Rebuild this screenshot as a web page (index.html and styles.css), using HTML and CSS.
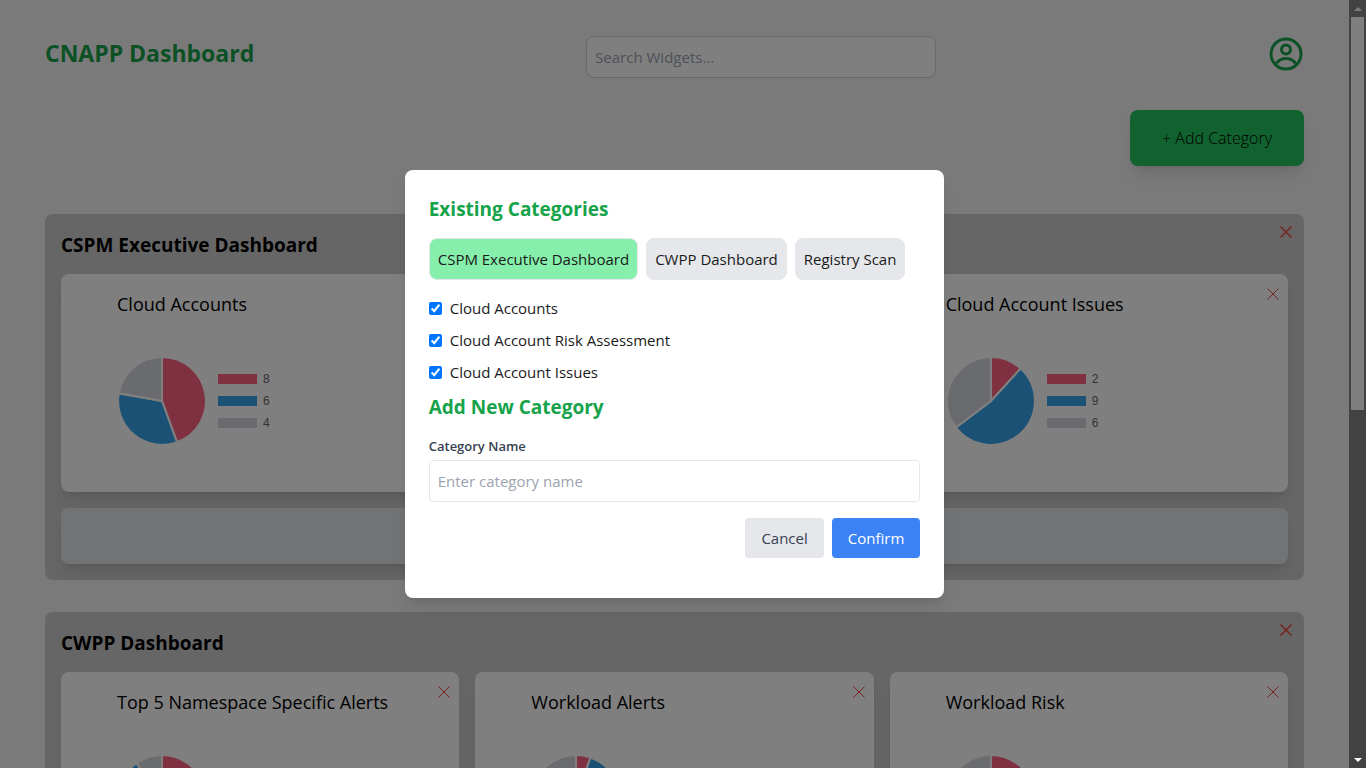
FILE: index.html
```
<!DOCTYPE html>
<html lang="en">
<head>
<meta charset="utf-8">
<meta name="viewport" content="width=device-width, initial-scale=1">
<title>CNAPP Dashboard</title>
<link rel="stylesheet" href="styles.css">
</head>
<body>
<svg class="symbols" aria-hidden="true">
  <symbol id="x" viewBox="0 0 20 20"><path d="M4.5 4.5l11 11M15.5 4.5l-11 11" fill="none" stroke="currentColor"/></symbol>
</svg>
<div class="shell">
  <div class="viewport">
    <main class="page">
      <header class="topbar">
        <h1 class="brand">CNAPP Dashboard</h1>
        <input class="search" type="search" placeholder="Search Widgets..." aria-label="Search widgets">
        <button class="profile" type="button" aria-label="Profile">
          <svg viewBox="0 0 24 24" width="36" height="36" fill="none" stroke="currentColor" stroke-width="2"><circle cx="12" cy="12" r="10"/><circle cx="12" cy="9" r="3"/><path d="M5.500 18.300A8 8 0 0 1 18.500 18.300"/></svg>
        </button>
      </header>
      <div class="actions"><button class="add" type="button">+ Add Category</button></div>

      <section class="category">
        <h2 class="category-title">CSPM Executive Dashboard</h2>
        <button class="close" type="button" aria-label="Remove category"><svg><use href="#x"/></svg></button>
        <div class="widgets">
          <article class="widget">
            <h3 class="widget-title">Cloud Accounts</h3>
            <div class="chart">
              <svg class="pie" viewBox="1 1 88 88"><path class="red" d="M45 45V2A43 43 0 0 1 59.700 85.400Z"/><path class="blue" d="M45 45L59.700 85.400A43 43 0 0 1 2.700 37.500Z"/><path class="gray" d="M45 45L2.700 37.500A43 43 0 0 1 45 2Z"/></svg>
              <ul class="legend"><li><span class="swatch red"></span>8</li><li><span class="swatch blue"></span>6</li><li><span class="swatch gray"></span>4</li></ul>
            </div>
          </article>
          <article class="widget">
            <h3 class="widget-title">Cloud Account Risk Assessment</h3>
          </article>
          <article class="widget">
            <h3 class="widget-title">Cloud Account Issues</h3>
            <button class="close" type="button" aria-label="Remove widget"><svg><use href="#x"/></svg></button>
            <div class="chart">
              <svg class="pie" viewBox="1 1 88 88"><path class="red" d="M45 45V2A43 43 0 0 1 74 13.200Z"/><path class="blue" d="M45 45L74 13.200A43 43 0 1 1 10.700 70.900Z"/><path class="gray" d="M45 45L10.700 70.900A43 43 0 0 1 45 2Z"/></svg>
              <ul class="legend"><li><span class="swatch red"></span>2</li><li><span class="swatch blue"></span>9</li><li><span class="swatch gray"></span>6</li></ul>
            </div>
          </article>
          <div class="slot"></div>
        </div>
      </section>

      <section class="category">
        <h2 class="category-title">CWPP Dashboard</h2>
        <button class="close" type="button" aria-label="Remove category"><svg><use href="#x"/></svg></button>
        <div class="widgets">
          <article class="widget">
            <h3 class="widget-title">Top 5 Namespace Specific Alerts</h3>
            <button class="close" type="button" aria-label="Remove widget"><svg><use href="#x"/></svg></button>
            <div class="chart">
              <svg class="pie" viewBox="1 1 88 88"><path class="red" d="M45 45V2A43 43 0 0 1 59.700 85.400Z"/><path class="blue" d="M45 45L59.700 85.400A43 43 0 0 1 20 10Z"/><path class="gray" d="M45 45L20 10A43 43 0 0 1 45 2Z"/></svg>
            </div>
          </article>
          <article class="widget">
            <h3 class="widget-title">Workload Alerts</h3>
            <button class="close" type="button" aria-label="Remove widget"><svg><use href="#x"/></svg></button>
            <div class="chart">
              <svg class="pie" viewBox="1 1 88 88"><path class="red" d="M45 45V2A43 43 0 0 1 59.200 4.400Z"/><path class="blue" d="M45 45L59.200 4.400A43 43 0 1 1 30.300 85.400Z"/><path class="gray" d="M45 45L30.300 85.400A43 43 0 0 1 45 2Z"/></svg>
            </div>
          </article>
          <article class="widget">
            <h3 class="widget-title">Workload Risk</h3>
            <button class="close" type="button" aria-label="Remove widget"><svg><use href="#x"/></svg></button>
            <div class="chart">
              <svg class="pie" viewBox="1 1 88 88"><path class="red" d="M45 45V2A43 43 0 0 1 59.700 85.400Z"/><path class="blue" d="M45 45L59.700 85.400A43 43 0 0 1 7.800 66.500Z"/><path class="gray" d="M45 45L7.800 66.500A43 43 0 0 1 45 2Z"/></svg>
            </div>
          </article>
        </div>
      </section>
    </main>

    <div class="overlay">
      <form class="modal" role="dialog" aria-modal="true" aria-labelledby="existing">
        <h2 class="modal-title" id="existing">Existing Categories</h2>
        <div class="chips">
          <button class="chip selected" type="button">CSPM Executive Dashboard</button>
          <button class="chip" type="button">CWPP Dashboard</button>
          <button class="chip" type="button">Registry Scan</button>
        </div>
        <label class="check"><input type="checkbox" checked>Cloud Accounts</label>
        <label class="check"><input type="checkbox" checked>Cloud Account Risk Assessment</label>
        <label class="check"><input type="checkbox" checked>Cloud Account Issues</label>
        <h2 class="modal-title">Add New Category</h2>
        <label class="field-label" for="category-name">Category Name</label>
        <input class="field" id="category-name" type="text" placeholder="Enter category name">
        <div class="buttons">
          <button class="button cancel" type="button">Cancel</button>
          <button class="button confirm" type="submit">Confirm</button>
        </div>
      </form>
    </div>
  </div>

  <div class="scrollbar" aria-hidden="true">
    <span class="arrow up"></span>
    <span class="thumb"></span>
    <span class="arrow down"></span>
  </div>
</div>
</body>
</html>
```
FILE: styles.css
```
*, *::before, *::after { box-sizing: border-box; }
body, h1, h2, h3, ul { margin: 0; padding: 0; }
body {
  font: 15px/24px "Open Sans", "Noto Sans", sans-serif;
  color: #000;
}
button, input { font: inherit; color: inherit; margin: 0; }
button { border: 0; background: none; padding: 0; cursor: pointer; }
.symbols { display: none; }

.shell { display: flex; height: 100vh; overflow: hidden; }
.viewport { position: relative; flex: 1; min-width: 0; overflow: hidden; background: #f4f4f4; }
.page { padding: 36px 45px; }

.topbar { display: flex; justify-content: space-between; align-items: flex-start; margin-bottom: 32px; }
.brand { font-size: 23px; line-height: 34px; font-weight: 700; color: #16a34a; }
.search {
  width: 350px;
  height: 42px;
  padding: 8px;
  border: 1px solid #d1d5db;
  border-radius: 8px;
  background: #fff;
  appearance: none;
}
.search::placeholder, .field::placeholder { color: #9ca3af; opacity: 1; }
.profile { height: 36px; color: #16a34a; }
.profile svg { display: block; }

.actions { display: flex; justify-content: flex-end; margin-bottom: 48px; }
.add {
  padding: 16px 32px;
  border-radius: 8px;
  background: #22c55e;
  font-size: 16px;
  font-weight: 300;
  box-shadow: 0 10px 15px -3px rgba(0, 0, 0, .1), 0 4px 6px -4px rgba(0, 0, 0, .1);
}

.category {
  position: relative;
  margin-bottom: 32px;
  padding: 16px;
  border-radius: 8px;
  background: #cdcdcd;
}
.category-title { margin-bottom: 14px; font-size: 19px; line-height: 30px; font-weight: 700; }
.close { position: absolute; top: 8px; right: 8px; width: 20px; height: 20px; color: #ef4444; }
.close svg { display: block; width: 20px; height: 20px; stroke-width: 1.5; }
.widget .close { top: 10px; right: 5px; }
.widget .close svg { stroke-width: 1; }

.widgets { display: grid; grid-template-columns: repeat(3, 1fr); gap: 16px; }
.widget, .slot {
  position: relative;
  border-radius: 8px;
  background: #fff;
  box-shadow: 0 10px 15px -3px rgba(0, 0, 0, .1), 0 4px 6px -4px rgba(0, 0, 0, .1);
}
.widget { padding: 16px 16px 16px 56px; }
.slot { grid-column: 1 / -1; height: 56px; background: #e5e7eb; }
.widget-title { font-size: 18px; line-height: 28px; font-weight: 400; }
.chart { display: flex; align-items: center; gap: 11px; padding: 38px 0 30px; }
.pie { width: 90px; height: 90px; stroke: #fff; stroke-width: 2; }
.red { fill: #ff6384; background: #ff6384; }
.blue { fill: #36a2eb; background: #36a2eb; }
.gray { fill: #d4d6dd; background: #d4d6dd; }
.legend { list-style: none; font: 12px/22px "Liberation Sans", Arial, sans-serif; color: #666; }
.legend li { display: flex; align-items: center; gap: 6px; }
.swatch { width: 39px; height: 10px; }

.overlay {
  position: absolute;
  inset: 0;
  display: flex;
  align-items: center;
  justify-content: center;
  background: rgba(0, 0, 0, .5);
}
.modal {
  width: 40%;
  padding: 24px 24px 40px;
  border-radius: 8px;
  background: #fff;
  box-shadow: 0 10px 15px -3px rgba(0, 0, 0, .1), 0 4px 6px -4px rgba(0, 0, 0, .1);
}
.modal-title { margin-bottom: 14px; font-size: 19px; line-height: 30px; font-weight: 700; color: #16a34a; }
.chips { display: flex; gap: 8px; margin-bottom: 16px; }
.chip {
  padding: 8px;
  border: 1px solid #e5e7eb;
  border-radius: 8px;
  background: #e5e7eb;
  color: #1a1a1a;
  white-space: nowrap;
}
.selected { background: #86efac; }
.check { display: flex; align-items: center; gap: 8px; margin-bottom: 8px; color: #1a1a1a; }
.check input { width: 13px; height: 13px; }
.field-label { display: block; margin-bottom: 4px; font-size: 13px; line-height: 20px; font-weight: 600; color: #374151; }
.field {
  display: block;
  width: 100%;
  height: 42px;
  padding: 8px;
  border: 1px solid #e5e7eb;
  border-radius: 4px;
  background: #fff;
}
.buttons { display: flex; justify-content: flex-end; gap: 8px; margin-top: 16px; }
.button { padding: 8px 16px; border-radius: 4px; }
.cancel { background: #e5e7eb; color: #374151; }
.confirm { background: #3b82f6; color: #fff; }

.scrollbar {
  display: flex;
  flex-direction: column;
  align-items: center;
  width: 17px;
  background: #424242;
}
.thumb { width: 13px; height: 393px; background: #7e7e7e; }
.arrow { display: flex; align-items: center; justify-content: center; width: 17px; height: 17px; }
.arrow::before { content: ""; border: 4px solid transparent; }
.up::before { border-top: 0; border-bottom-color: #7e7e7e; }
.down { margin-top: auto; }
.down::before { border-bottom: 0; border-top-color: #fff; }
```
